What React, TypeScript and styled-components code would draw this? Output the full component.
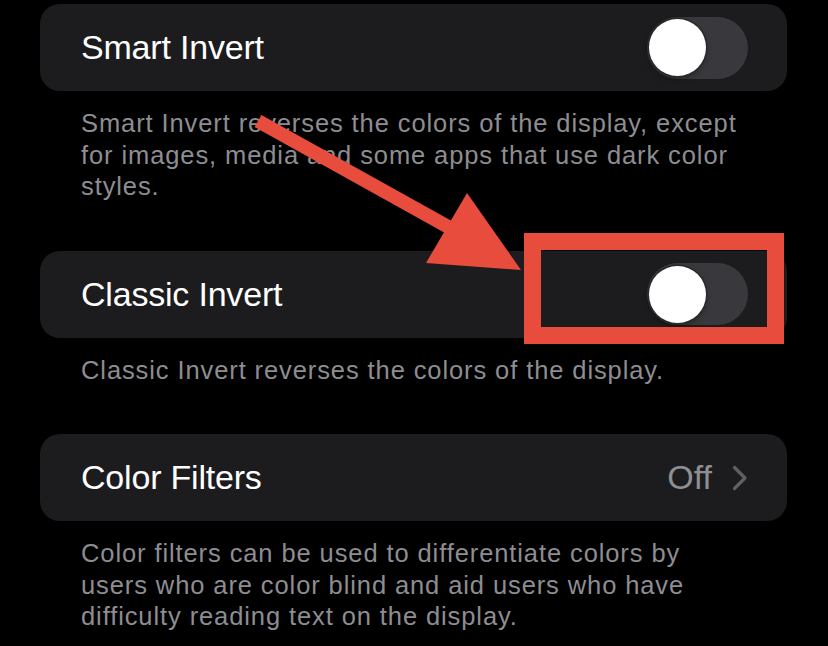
import styled, { createGlobalStyle } from "styled-components";

const GlobalStyle = createGlobalStyle`
    html, body {
        margin: 0;
        padding: 0;
        background: #000000;
    }
    body {
        font-family: "Liberation Sans", Arial, sans-serif;
        -webkit-font-smoothing: antialiased;
    }
`;

const Page = styled.div`
    position: relative;
    width: 828px;
    height: 646px;
    overflow: hidden;
    background: #000000;
    padding: 4px 41px 0 40px;
    box-sizing: border-box;
`;

const Section = styled.section`
    margin-bottom: 48px;
`;

const Card = styled.div`
    display: flex;
    align-items: center;
    justify-content: space-between;
    height: 87px;
    padding: 0 39px 0 41px;
    background: #1c1c1e;
    border-radius: 20px;
    box-sizing: border-box;
`;

const Title = styled.span`
    color: #ffffff;
    font-size: 34px;
    letter-spacing: -0.2px;
`;

const Footer = styled.p`
    margin: 17px 0 0;
    padding: 0 36px 0 41px;
    color: #8d8d92;
    font-size: 25.5px;
    line-height: 31.5px;
    letter-spacing: 0.9px;
`;

const Track = styled.div<{ $on?: boolean }>`
    display: flex;
    align-items: center;
    justify-content: ${(p) => (p.$on ? "flex-end" : "flex-start")};
    width: 101px;
    height: 62px;
    padding: 0 2px;
    border-radius: 31px;
    background: ${(p) => (p.$on ? "#34c759" : "#39393d")};
    box-sizing: border-box;
`;

const Knob = styled.div`
    width: 57px;
    height: 57px;
    border-radius: 50%;
    background: #ffffff;
    box-shadow: 0 0 0 1.5px #2a2a2d, 0 3px 6px rgba(0, 0, 0, 0.35);
`;

const Detail = styled.div`
    display: flex;
    align-items: center;
    gap: 20px;
`;

const Value = styled.span`
    color: #8e8e93;
    font-size: 34px;
`;

const Highlight = styled.div`
    position: absolute;
    left: 524px;
    top: 233px;
    width: 260px;
    height: 111px;
    border: 17px solid #e84c3d;
    box-sizing: border-box;
    pointer-events: none;
`;

const ArrowLayer = styled.svg`
    position: absolute;
    left: 0;
    top: 0;
    pointer-events: none;
`;

function Toggle({ on }: { on?: boolean }) {
    return (
        <Track $on={on}>
            <Knob />
        </Track>
    );
}

function Chevron() {
    return (
        <svg width="16" height="26" viewBox="0 0 16 26">
            <path d="M2.5 2.5 L13 13 L2.5 23.5" fill="none" stroke="#5f5f64" strokeWidth="3.2" strokeLinecap="round" strokeLinejoin="round" />
        </svg>
    );
}

export default function App() {
    return (
        <>
            <GlobalStyle />
            <Page>
                <Section>
                    <Card>
                        <Title>Smart Invert</Title>
                        <Toggle />
                    </Card>
                    <Footer>
                        Smart Invert reverses the colors of the display, except for images, media and some apps that use dark color styles.
                    </Footer>
                </Section>

                <Section>
                    <Card>
                        <Title>Classic Invert</Title>
                        <Toggle />
                    </Card>
                    <Footer>Classic Invert reverses the colors of the display.</Footer>
                </Section>

                <Section>
                    <Card>
                        <Title>Color Filters</Title>
                        <Detail>
                            <Value>Off</Value>
                            <Chevron />
                        </Detail>
                    </Card>
                    <Footer>
                        Color filters can be used to differentiate colors by users who are color blind and aid users who have difficulty reading text on the display.
                    </Footer>
                </Section>

                <Highlight />
                <ArrowLayer width="828" height="646" viewBox="0 0 828 646">
                    <line x1="258" y1="121" x2="452" y2="229" stroke="#e84c3d" strokeWidth="14" />
                    <polygon points="467,193 426,263 521,270" fill="#e84c3d" />
                </ArrowLayer>
            </Page>
        </>
    );
}
